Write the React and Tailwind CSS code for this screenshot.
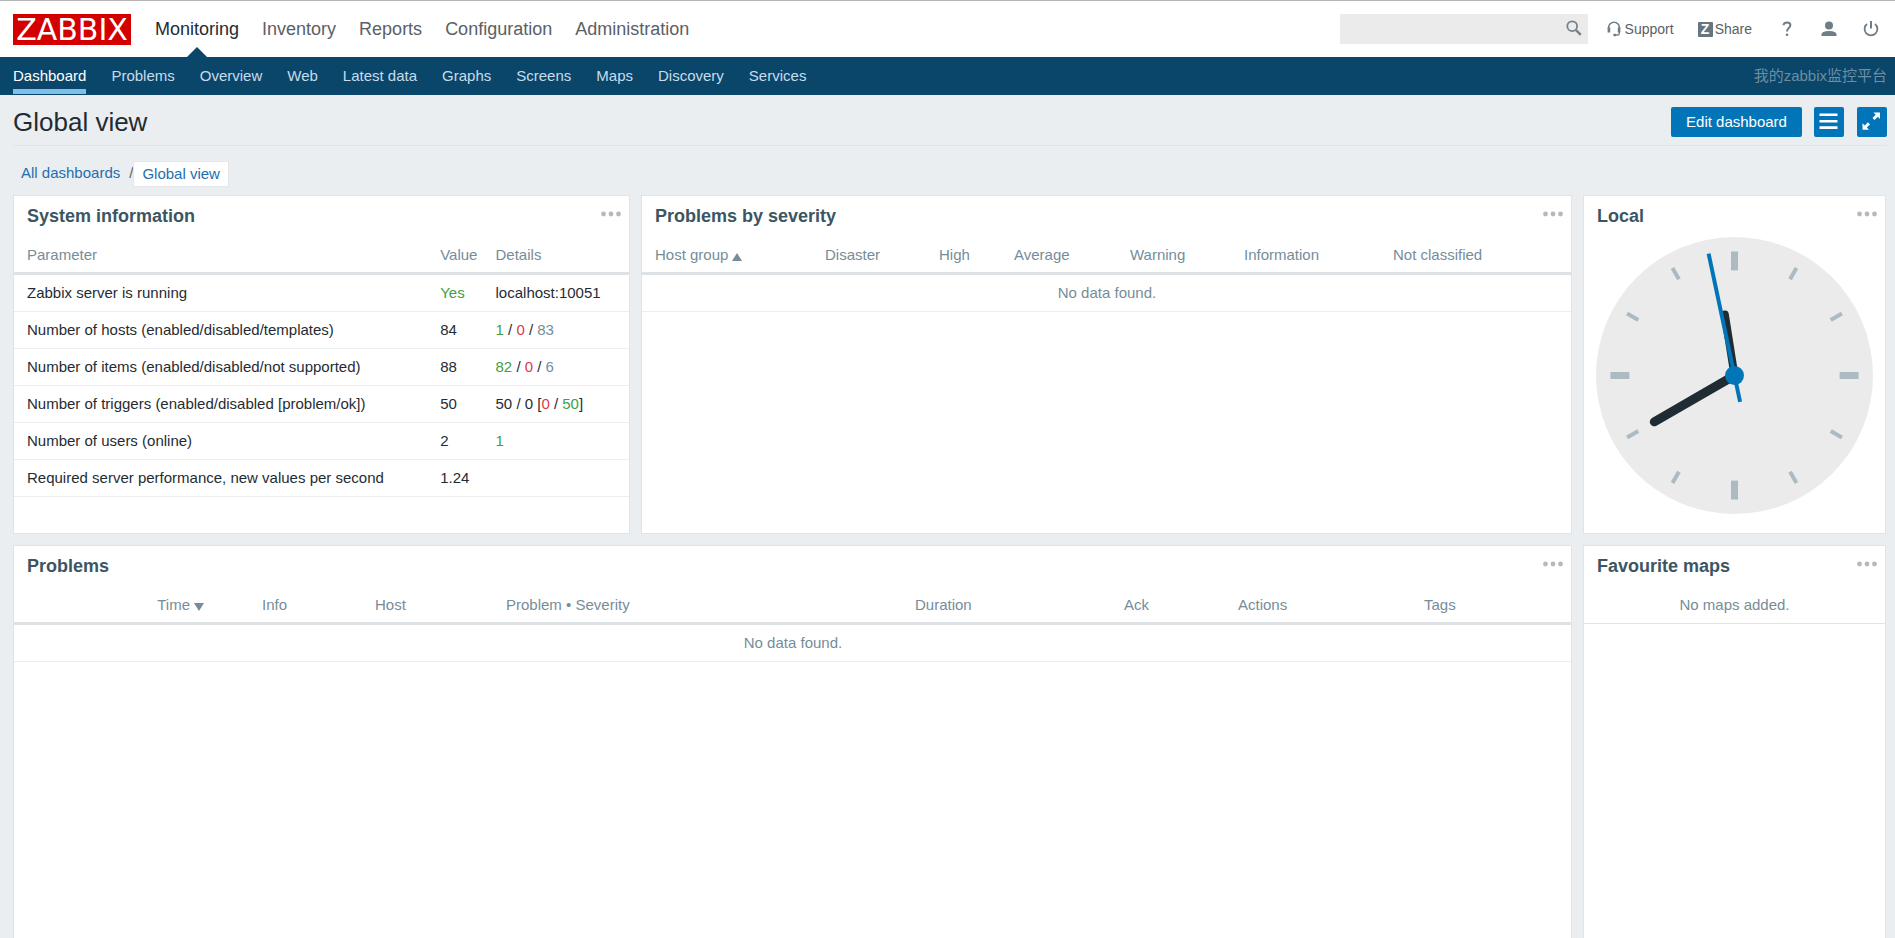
import React, { useState } from "react";
import clsx from "clsx";

const mainMenu = ["Monitoring", "Inventory", "Reports", "Configuration", "Administration"];

const subMenu = [
  "Dashboard",
  "Problems",
  "Overview",
  "Web",
  "Latest data",
  "Graphs",
  "Screens",
  "Maps",
  "Discovery",
  "Services",
];

const green = "text-[#429e47]";
const red = "text-[#d9384a]";
const grey = "text-[#768d99]";

// details are lists of [text, colour] parts
const systemInfo = [
  { name: "Zabbix server is running", value: "Yes", valueColor: green, details: [["localhost:10051"]] },
  {
    name: "Number of hosts (enabled/disabled/templates)",
    value: "84",
    details: [["1", green], [" / "], ["0", red], [" / "], ["83", grey]],
  },
  {
    name: "Number of items (enabled/disabled/not supported)",
    value: "88",
    details: [["82", green], [" / "], ["0", red], [" / "], ["6", grey]],
  },
  {
    name: "Number of triggers (enabled/disabled [problem/ok])",
    value: "50",
    details: [["50 / 0 ["], ["0", red], [" / "], ["50", green], ["]"]],
  },
  { name: "Number of users (online)", value: "2", details: [["1", green]] },
  { name: "Required server performance, new values per second", value: "1.24", details: [] },
];

const severities = ["Disaster", "High", "Average", "Warning", "Information", "Not classified"];

function SearchIcon() {
  return (
    <svg viewBox="0 0 16 16" className="h-4 w-4" fill="none" stroke="#768088">
      <circle cx="6.2" cy="6.2" r="4.9" strokeWidth="1.8" />
      <path d="M9.8 9.8 L14.8 14.8" strokeWidth="2.4" />
    </svg>
  );
}

function SupportIcon() {
  return (
    <svg viewBox="0 0 14 16" className="h-4 w-[14px]" fill="none" stroke="#6f7d86">
      <path d="M1.6 8 V6.6 A5.4 5.4 0 0 1 12.4 6.6 V8" strokeWidth="1.6" />
      <path d="M1.9 6.5 V11.5 M12.1 6.5 V11.5" strokeWidth="2.6" />
      <path d="M12.3 11 V12.4 Q12.3 14 10.4 14 H8" strokeWidth="1.3" />
      <path d="M6.4 14 H9" strokeWidth="2.4" />
    </svg>
  );
}

function HelpIcon() {
  return (
    <svg viewBox="0 0 10 16" className="h-4 w-[10px]" fill="none" stroke="#6f7d86">
      <path d="M1.5 4.3 Q1.7 1.4 5 1.4 Q8.4 1.4 8.4 4.1 Q8.4 5.7 6.8 7 Q5 8.4 5 10.6" strokeWidth="2" />
      <circle cx="5" cy="13.8" r="1.3" fill="#6f7d86" stroke="none" />
    </svg>
  );
}

function UserIcon() {
  return (
    <svg viewBox="0 0 16 16" className="h-4 w-4" fill="#6f7d86">
      <circle cx="8" cy="4.6" r="4" />
      <path d="M0.5 15 V13.6 Q0.5 10 8 10 Q15.5 10 15.5 13.6 V15 Z" />
    </svg>
  );
}

function PowerIcon() {
  return (
    <svg viewBox="0 0 16 16" className="h-4 w-4" fill="none" stroke="#6f7d86">
      <path d="M4 3 A6.4 6.4 0 1 0 12 3" strokeWidth="1.8" />
      <path d="M8 0 V7.6" strokeWidth="2" />
    </svg>
  );
}

function MenuIcon() {
  return (
    <svg viewBox="0 0 30 30" className="h-[30px] w-[30px]" stroke="#fff" strokeWidth="2.6">
      <path d="M5.5 7.8 H23.5 M5.5 14.2 H23.5 M5.5 20.6 H23.5" />
    </svg>
  );
}

function FullscreenIcon() {
  return (
    <svg viewBox="0 0 30 30" className="h-[30px] w-[30px]" fill="#fff">
      <path d="M16.5 5.5 H23 V12 L20.8 9.8 L17.6 13 L15.5 10.9 L18.7 7.7 Z" />
      <path d="M5.5 16.3 L7.7 18.5 L10.9 15.3 L13 17.4 L9.8 20.6 L12 22.8 H5.5 Z" />
    </svg>
  );
}

function Clock() {
  const marks = Array.from({ length: 12 }, (_, i) => i);
  return (
    <svg viewBox="-139 -139 278 278" className="mx-auto block h-[277px] w-[277px]" role="img" aria-label="Clock">
      <circle r="139" fill="#ebebeb" />
      {marks.map((i) =>
        i % 3 === 0 ? (
          <rect key={i} x="-3.5" y="-124.5" width="7" height="19" fill="#acbbc2" transform={`rotate(${i * 30})`} />
        ) : (
          <rect key={i} x="-2" y="-124.5" width="4" height="13" fill="#acbbc2" transform={`rotate(${i * 30})`} />
        )
      )}
      <path d="M0 0 V-62" stroke="#1f2c33" strokeWidth="8" strokeLinecap="round" transform="rotate(-9)" />
      <path d="M0 0 V-93" stroke="#1f2c33" strokeWidth="9" strokeLinecap="round" transform="rotate(240)" />
      <path d="M0 27 V-125" stroke="#0275b8" strokeWidth="4" transform="rotate(-12)" />
      <circle r="9.5" fill="#0275b8" />
    </svg>
  );
}

function Widget({ title, className, children }) {
  return (
    <section className={clsx("border border-[#dfe4e7] bg-white", className)}>
      <header className="flex h-[41px] justify-between pr-2 pl-[13px]">
        <h4 className="text-[18px] leading-[41px] font-bold text-[#3c5563]">{title}</h4>
        <button type="button" aria-label={`${title} menu`} className="h-[35px]">
          <svg viewBox="0 0 20 6" className="h-[6px] w-5" fill="#b8b8b8">
            <circle cx="2.5" cy="3" r="2.4" />
            <circle cx="10" cy="3" r="2.4" />
            <circle cx="17.5" cy="3" r="2.4" />
          </svg>
        </button>
      </header>
      {children}
    </section>
  );
}

function Th({ className, children }) {
  return (
    <th
      className={clsx(
        "h-[38px] border-b-[3px] border-[#dfe2e4] px-2 pt-[2px] text-left font-normal whitespace-nowrap text-[#768d99] first:pl-[13px] last:pr-3",
        className
      )}
    >
      {children}
    </th>
  );
}

function Td({ className, children, ...rest }) {
  return (
    <td
      className={clsx("h-[37px] border-b border-[#ebeef0] px-2 whitespace-nowrap first:pl-[13px] last:pr-3", className)}
      {...rest}
    >
      {children}
    </td>
  );
}

function SortArrow({ down }) {
  return (
    <svg viewBox="0 0 10 8" className="ml-1 inline-block h-2 w-[10px] align-[-1px]" fill="#768d99">
      <path d={down ? "M0 0 H10 L5 8 Z" : "M0 8 H10 L5 0 Z"} />
    </svg>
  );
}

export default function App() {
  const [search, setSearch] = useState("");

  return (
    <div className="flex min-h-screen flex-col bg-[#ebeef0] font-['Liberation_Sans','Noto_Sans_CJK_SC',sans-serif] text-[15px] text-[#1f2c33]">
      {/* Top bar */}
      <header className="flex h-[57px] items-center border-t border-[#b5b5b5] bg-white pr-4 pl-[13px]">
        <a
          href="#"
          className="flex h-[31px] w-[118px] items-center justify-center bg-[#d40000] font-['DejaVu_Sans',sans-serif] text-[30px] leading-[31px] text-white"
        >
          ZABBIX
        </a>
        <nav className="ml-6 flex gap-[23px] self-stretch text-[18px]">
          {mainMenu.map((item, i) => (
            <a
              key={item}
              href="#"
              className={clsx("relative flex items-center", i === 0 ? "text-[#1f2c33]" : "text-[#5a6066]")}
            >
              {item}
              {i === 0 && (
                <span className="absolute bottom-0 left-1/2 -translate-x-1/2 border-x-[10px] border-b-[10px] border-x-transparent border-b-[#0a466a]" />
              )}
            </a>
          ))}
        </nav>
        <div className="ml-auto flex items-center text-[14px] text-[#5a6066]">
          <form className="relative" onSubmit={(e) => e.preventDefault()}>
            <input
              type="text"
              aria-label="Search"
              value={search}
              onChange={(e) => setSearch(e.target.value)}
              className="block h-[30px] w-[248px] bg-[#ebebeb] pr-8 pl-2 outline-none"
            />
            <button type="submit" aria-label="Search" className="absolute top-[6px] right-[6px]">
              <SearchIcon />
            </button>
          </form>
          <a href="#" className="ml-[19px] flex items-center gap-1">
            <SupportIcon />
            Support
          </a>
          <a href="#" className="ml-6 flex items-center gap-[2px]">
            <span className="h-[15px] w-[15px] rounded-[1px] bg-[#66757f] text-center text-[14px] leading-[15px] font-bold text-white">
              Z
            </span>
            Share
          </a>
          <a href="#" aria-label="Help" className="ml-[30px]">
            <HelpIcon />
          </a>
          <a href="#" aria-label="User profile" className="ml-[29px]">
            <UserIcon />
          </a>
          <a href="#" aria-label="Sign out" className="ml-[26px]">
            <PowerIcon />
          </a>
        </div>
      </header>

      {/* Second level menu */}
      <nav className="flex h-[38px] items-start justify-between bg-[#0a466a] pr-2 pl-[13px]">
        <div className="flex gap-[25px]">
          {subMenu.map((item, i) => (
            <a
              key={item}
              href="#"
              className={clsx(
                "flex h-[37px] items-center border-b-[5px] pt-[7px]",
                i === 0 ? "border-[#7fbfe9] text-white" : "border-transparent text-[#c7dcea]"
              )}
            >
              {item}
            </a>
          ))}
        </div>
        <span className="leading-[37px] text-[#6c8da3]">我的zabbix监控平台</span>
      </nav>

      {/* Page title */}
      <div className="mr-2 ml-[13px] flex h-[51px] items-start justify-between border-b border-[#dfe4e7] pt-3">
        <h1 className="text-[26px] leading-[31px]">Global view</h1>
        <div className="flex">
          <button type="button" className="h-[30px] w-[131px] rounded-xs bg-[#0275b8] text-white">
            Edit dashboard
          </button>
          <button type="button" aria-label="Actions" className="ml-3 rounded-xs bg-[#0275b8]">
            <MenuIcon />
          </button>
          <button type="button" aria-label="Fullscreen" className="ml-[13px] rounded-xs bg-[#0275b8]">
            <FullscreenIcon />
          </button>
        </div>
      </div>

      <nav aria-label="Breadcrumbs" className="flex h-[49px] items-center pt-[6px] pl-[21px] text-[#1f6fae]">
        <a href="#">All dashboards</a>
        <span className="ml-[9px] text-[#5a6066]">/</span>
        <a href="#" className="border border-[#e3e7ea] bg-white px-2 leading-[24px]">
          Global view
        </a>
      </nav>

      {/* Widgets */}
      <main className="mr-[9px] ml-[13px] grid flex-1 grid-cols-12 grid-rows-[339px_1fr] gap-[11px]">
        <Widget title="System information" className="col-span-4">
          <table className="w-full table-fixed border-separate border-spacing-0">
            <colgroup>
              <col className="w-[68%]" />
              <col className="w-[9%]" />
              <col />
            </colgroup>
            <thead>
              <tr>
                <Th>Parameter</Th>
                <Th>Value</Th>
                <Th>Details</Th>
              </tr>
            </thead>
            <tbody>
              {systemInfo.map((row) => (
                <tr key={row.name}>
                  <Td>{row.name}</Td>
                  <Td className={row.valueColor}>{row.value}</Td>
                  <Td>
                    {row.details.map(([text, color], i) => (
                      <span key={i} className={color}>
                        {text}
                      </span>
                    ))}
                  </Td>
                </tr>
              ))}
            </tbody>
          </table>
        </Widget>

        <Widget title="Problems by severity" className="col-span-6">
          <table className="w-full table-fixed border-separate border-spacing-0">
            <colgroup>
              <col className="w-[175px]" />
              <col className="w-[114px]" />
              <col className="w-[75px]" />
              <col className="w-[116px]" />
              <col className="w-[114px]" />
              <col className="w-[149px]" />
              <col className="w-[186px]" />
            </colgroup>
            <thead>
              <tr>
                <Th>
                  Host group
                  <SortArrow />
                </Th>
                {severities.map((s) => (
                  <Th key={s}>{s}</Th>
                ))}
              </tr>
            </thead>
            <tbody>
              <tr>
                <Td colSpan={7} className="text-center text-[#768d99]">
                  No data found.
                </Td>
              </tr>
            </tbody>
          </table>
        </Widget>

        <Widget title="Local" className="col-span-2">
          <Clock />
        </Widget>

        <Widget title="Problems" className="col-span-10 border-b-0">
          <table className="w-full table-fixed border-separate border-spacing-0">
            <colgroup>
              <col className="w-[198px]" />
              <col className="w-[42px]" />
              <col className="w-[113px]" />
              <col className="w-[131px]" />
              <col className="w-[409px]" />
              <col className="w-[209px]" />
              <col className="w-[114px]" />
              <col className="w-[186px]" />
              <col className="w-[155px]" />
            </colgroup>
            <thead>
              <tr>
                <Th className="text-right">
                  Time
                  <SortArrow down />
                </Th>
                <Th />
                <Th>Info</Th>
                <Th>Host</Th>
                <Th>Problem • Severity</Th>
                <Th>Duration</Th>
                <Th>Ack</Th>
                <Th>Actions</Th>
                <Th>Tags</Th>
              </tr>
            </thead>
            <tbody>
              <tr>
                <Td colSpan={9} className="text-center text-[#768d99]">
                  No data found.
                </Td>
              </tr>
            </tbody>
          </table>
        </Widget>

        <Widget title="Favourite maps" className="col-span-2 border-b-0">
          <p className="h-[37px] border-b border-[#dfe4e7] text-center leading-[36px] text-[#768d99]">No maps added.</p>
        </Widget>
      </main>
    </div>
  );
}
